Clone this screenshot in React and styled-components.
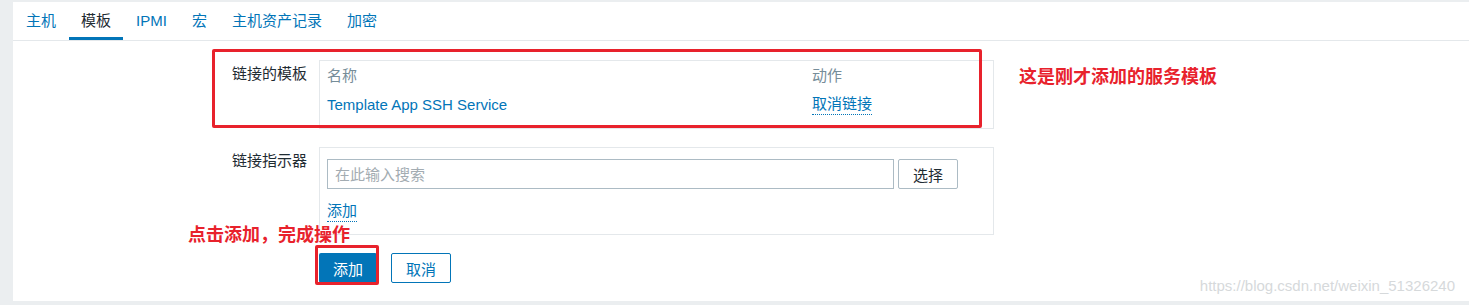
import React from 'react'
import styled, { createGlobalStyle } from 'styled-components'

const GlobalStyle = createGlobalStyle`
    html, body {
        margin: 0;
        padding: 0;
        background: #ebeef0;
        font-family: "Liberation Sans", "Noto Sans CJK SC", sans-serif;
        font-size: 15px;
        color: #1f2c33;
    }
`

const tabs = ['主机', '模板', 'IPMI', '宏', '主机资产记录', '加密']

function App() {
    return (
        <Page>
            <GlobalStyle />
            <Panel>
                <TabBar>
                    {tabs.map((t) => (
                        <Tab key={t} $active={t === '模板'}>{t}</Tab>
                    ))}
                </TabBar>

                <Form>
                    <Label>链接的模板</Label>
                    <Box>
                        <Table>
                            <thead>
                                <tr>
                                    <th>名称</th>
                                    <th>动作</th>
                                </tr>
                            </thead>
                            <tbody>
                                <tr>
                                    <td><Link>Template App SSH Service</Link></td>
                                    <td><DottedLink>取消链接</DottedLink></td>
                                </tr>
                            </tbody>
                        </Table>
                    </Box>

                    <Label>链接指示器</Label>
                    <Box $padded>
                        <InputRow>
                            <SearchInput placeholder="在此输入搜索" />
                            <SelectButton>选择</SelectButton>
                        </InputRow>
                        <AddRow>
                            <DottedLink>添加</DottedLink>
                        </AddRow>
                    </Box>

                    <span />
                    <ButtonRow>
                        <PrimaryButton>添加</PrimaryButton>
                        <OutlineButton>取消</OutlineButton>
                    </ButtonRow>
                </Form>

                <Mark $left={199} $top={47} $width={770} $height={79} />
                <Note $left={1006} $top={63}>这是刚才添加的服务模板</Note>
                <Note $left={175} $top={221}>点击添加，完成操作</Note>
                <Mark $left={302} $top={243} $width={64} $height={40} />

                <Watermark>https://blog.csdn.net/weixin_51326240</Watermark>
            </Panel>
        </Page>
    )
}

const Page = styled.div`
    padding: 2px 0 0 13px;
    height: 305px;
    box-sizing: border-box;
    overflow: hidden;
`

const Panel = styled.div`
    position: relative;
    background: #ffffff;
    height: 299px;
`

const TabBar = styled.div`
    display: flex;
    gap: 1px;
    padding-left: 1px;
    height: 38px;
    border-bottom: 1px solid #e4e8eb;
`

const Tab = styled.div`
    display: flex;
    align-items: center;
    padding: 0 12px;
    box-sizing: border-box;
    height: 38px;
    color: ${(p) => (p.$active ? '#1f2c33' : '#0275b8')};
    border-bottom: 3px solid ${(p) => (p.$active ? '#0275b8' : 'transparent')};
    padding-top: 3px;
    line-height: 18px;
`

const Form = styled.div`
    display: grid;
    grid-template-columns: 294px 675px;
    column-gap: 12px;
    row-gap: 18px;
    padding-top: 19px;
`

const Label = styled.div`
    text-align: right;
    padding-top: 5px;
    line-height: 18px;
    color: #1f2c33;
`

const Box = styled.div`
    border: 1px solid #e4e8eb;
    padding: ${(p) => (p.$padded ? '11px 7px 12px' : '0 7px 9px')};
`

const Table = styled.table`
    width: 100%;
    border-collapse: collapse;

    th, td {
        text-align: left;
        font-weight: normal;
        padding: 0;
        height: 29px;
        line-height: 18px;
        vertical-align: middle;
    }

    th {
        color: #768d99;
    }

    th:first-child {
        width: 485px;
    }
`

const Link = styled.span`
    color: #0275b8;
`

const DottedLink = styled.span`
    display: inline-block;
    color: #0275b8;
    line-height: 20px;
    border-bottom: 1px dotted #0275b8;
`

const InputRow = styled.div`
    display: flex;
    gap: 4px;
    height: 30px;
`

const SearchInput = styled.input`
    width: 567px;
    height: 30px;
    box-sizing: border-box;
    border: 1px solid #acbbc4;
    padding: 0 7px;
    font: inherit;
    color: #1f2c33;
    outline: none;

    &::placeholder {
        color: #a3acb2;
    }
`

const SelectButton = styled.button`
    width: 60px;
    height: 30px;
    box-sizing: border-box;
    border: 1px solid #acbbc4;
    border-radius: 2px;
    background: #ffffff;
    font: inherit;
    color: #1f2c33;
    padding: 0;
`

const AddRow = styled.div`
    margin-top: 12px;
`

const ButtonRow = styled.div`
    display: flex;
    gap: 14px;
`

const PrimaryButton = styled.button`
    height: 30px;
    width: 58px;
    border: none;
    border-radius: 2px;
    background: #0275b8;
    color: #ffffff;
    font: inherit;
    padding: 0;
`

const OutlineButton = styled.button`
    height: 30px;
    width: 60px;
    box-sizing: border-box;
    border: 1px solid #0275b8;
    border-radius: 2px;
    background: #ffffff;
    color: #0275b8;
    font: inherit;
    padding: 0;
`

const Mark = styled.div`
    position: absolute;
    left: ${(p) => p.$left}px;
    top: ${(p) => p.$top}px;
    width: ${(p) => p.$width}px;
    height: ${(p) => p.$height}px;
    box-sizing: border-box;
    border: 3px solid #e8222c;
    border-radius: 2px;
    pointer-events: none;
`

const Note = styled.div`
    position: absolute;
    left: ${(p) => p.$left}px;
    top: ${(p) => p.$top}px;
    font-size: 18px;
    font-weight: bold;
    line-height: 24px;
    color: #e8222c;
    white-space: nowrap;
`

const Watermark = styled.div`
    position: absolute;
    right: 14px;
    bottom: 6px;
    font-size: 15px;
    line-height: 18px;
    color: #d6d9db;
`

export default App
